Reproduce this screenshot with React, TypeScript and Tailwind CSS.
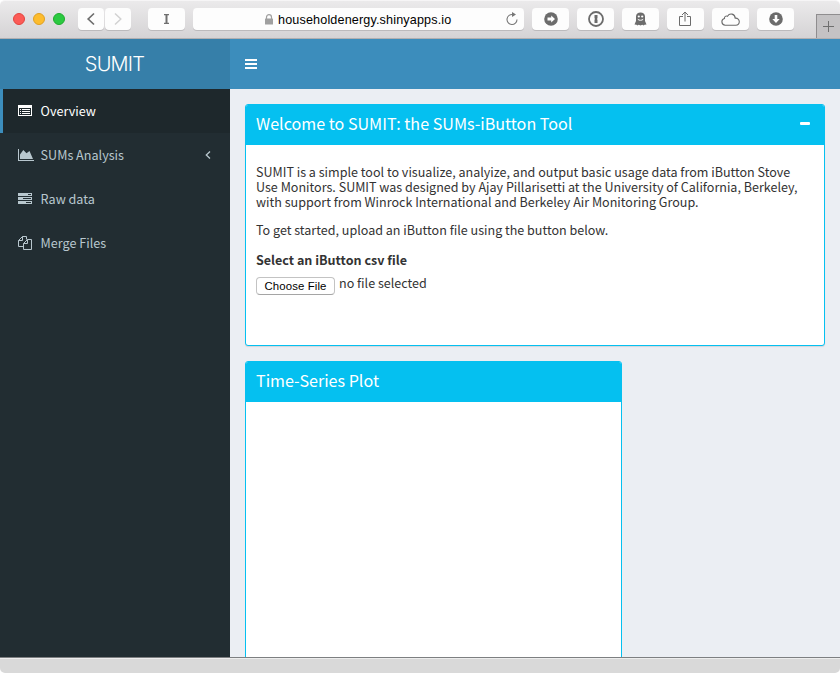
import type { ReactNode } from "react";

const SANS = "font-['Noto_Sans_CJK_SC','Open_Sans',sans-serif]";
const HELV = "font-['Liberation_Sans',sans-serif]";

function ToolButton({ className = "w-[37px]", children }: { className?: string; children?: ReactNode }) {
  return (
    <div
      className={`flex h-[22px] shrink-0 items-center justify-center rounded-[4px] bg-[#fdfdfd] shadow-[0_1px_0_#bcbabc] ${className}`}
    >
      {children}
    </div>
  );
}

function BrowserBar() {
  return (
    <header className="flex h-[39px] shrink-0 items-start rounded-t-[5px] border-t border-b border-t-[#f6f5f6] border-b-[#b1afb1] bg-linear-to-b from-[#ebeaeb] to-[#d5d3d5]">
      <div className="mt-[12px] ml-[13px] flex gap-2">
        <span className="size-3 rounded-full border border-[#e2443f] bg-[#fc5b57]" />
        <span className="size-3 rounded-full border border-[#dfa023] bg-[#fdbc2d]" />
        <span className="size-3 rounded-full border border-[#1eab2d] bg-[#2bc940]" />
      </div>
      <div className="mt-[7px] ml-[13px] flex">
        <ToolButton className="mr-px w-[26px]">
          <svg width="10" height="14" viewBox="0 0 10 14" fill="none" stroke="#6d6d6d" strokeWidth="1.7">
            <path d="M8 1.5 2.2 7 8 12.5" />
          </svg>
        </ToolButton>
        <ToolButton className="mr-[17px] w-[26px]">
          <svg width="10" height="14" viewBox="0 0 10 14" fill="none" stroke="#d2d2d2" strokeWidth="1.5">
            <path d="M2 1.5 7.8 7 2 12.5" />
          </svg>
        </ToolButton>
        <ToolButton className="mr-2 w-[37px]">
          <svg width="5" height="10" viewBox="0 0 5 10" fill="#707070" className="mr-px">
            <path d="M0 0h5v1.200H3.500v7.600H5V10H0V8.800h1.500V1.200H0z" />
          </svg>
        </ToolButton>
        <ToolButton className="mr-2 w-[331px]">
          <div className="flex w-full items-center pl-[71px]">
            <svg width="10" height="11" viewBox="0 0 10 11" className="mt-px">
              <rect x="1" y="4.500" width="8" height="6" rx=".5" fill="#a0a0a0" />
              <path d="M2.500 5V3.200a2.500 2.500 0 0 1 5 0V5" fill="none" stroke="#a0a0a0" strokeWidth="1.2" />
            </svg>
            <span className={`${HELV} mt-px ml-1 w-[174px] text-[12.6px] leading-[22px] tracking-[0.012em] whitespace-nowrap text-black`}>
              householdenergy.shinyapps.io
            </span>
            <svg width="14" height="14" viewBox="0 0 14 14" className="ml-[53px]">
              <path d="M8 2.600A5 5 0 1 0 12 7.500" fill="none" stroke="#777" strokeWidth="1.1" />
              <path d="M7 0v5l4-2.400z" fill="#777" />
            </svg>
          </div>
        </ToolButton>
        <div className="flex gap-2">
          <ToolButton>
            <svg width="14" height="14" viewBox="0 0 14 14">
              <circle cx="7" cy="7" r="6.800" fill="#6c6c6c" />
              <path d="M3.500 5.600h3.700V3.400L11 7 7.200 10.600V8.400H3.500z" fill="#fff" />
            </svg>
          </ToolButton>
          <ToolButton>
            <svg width="16" height="16" viewBox="0 0 16 16">
              <circle cx="8" cy="8" r="7" fill="none" stroke="#6c6c6c" strokeWidth="1.800" />
              <path d="M6.500 4h3v3.200l-.6.700.6.800V12h-3V8.700l.6-.7-.6-.8z" fill="#6c6c6c" />
            </svg>
          </ToolButton>
          <ToolButton>
            <svg width="13" height="14" viewBox="0 0 13 14">
              <path
                d="M2 4.500C2 2 4 .5 6.500.5S11 2 11 4.500V9l1.500 3.500-2 .2-.8.800-1.500-.8-1.700.8-1.700-.8-1.500.8-.8-.8-2-.2L2 9z"
                fill="#6c6c6c"
              />
              <circle cx="4.800" cy="4.500" r="1.100" fill="#fff" />
              <circle cx="8.200" cy="4.500" r="1.100" fill="#fff" />
              <path d="M3.800 7.300c1.300 1.300 4.100 1.300 5.400 0" fill="none" stroke="#fff" />
            </svg>
          </ToolButton>
          <ToolButton>
            <svg width="12" height="16" viewBox="0 0 12 16" fill="none" stroke="#6c6c6c" className="mr-px -mt-px">
              <path d="M4 5.500H.5v9h11v-9H8M6 10.500V1.500M3 4l3-3 3 3" />
            </svg>
          </ToolButton>
          <ToolButton>
            <svg width="19" height="13" viewBox="0 0 19 13" fill="none" stroke="#6c6c6c" strokeWidth="1.100">
              <path d="M4.200 12.200a3.400 3.400 0 0 1-.7-6.700C3.200 3.600 5 2.500 6.500 3.200 8.600-.3 13.900.5 14.200 5.200c5.200-.5 5.500 7 .5 7z" />
            </svg>
          </ToolButton>
          <ToolButton>
            <svg width="14" height="14" viewBox="0 0 14 14">
              <circle cx="7" cy="7" r="6.800" fill="#6c6c6c" />
              <path d="M5.700 3h2.600v4h2.400L7 11 3.300 7h2.400z" fill="#fff" />
            </svg>
          </ToolButton>
        </div>
      </div>
      <div className="mt-[13px] ml-auto flex h-6 w-6 items-center justify-center border-t border-l border-[#8f8d8f] bg-[#c4c2c4]">
        <svg width="11" height="11" viewBox="0 0 11 11" stroke="#6f6f6f">
          <path d="M5.500 0v11M0 5.500h11" />
        </svg>
      </div>
    </header>
  );
}

const ListIcon = (
  <svg width="14" height="12" viewBox="0 0 14 12" fill="currentColor" shapeRendering="crispEdges">
    <path fillRule="evenodd" d="M0 0h14v11H0zM1 3v7h12V3z" />
    <path d="M2 4h1v1H2zM4 4h8v1H4zM2 6h1v1H2zM4 6h8v1H4zM2 8h1v1H2zM4 8h8v1H4z" />
  </svg>
);

const ChartIcon = (
  <svg width="16" height="12" viewBox="0 0 16 12" fill="currentColor">
    <path d="M0 0h1v11h15v1H0zM2 10V5.500L5.300 1l3.200 3.200L11.500 2 15 10z" />
  </svg>
);

const TasksIcon = (
  <svg width="14" height="12" viewBox="0 0 14 12" fill="currentColor" shapeRendering="crispEdges">
    <path fillRule="evenodd" d="M0 0h14v3H0zM10 1v1h3V1zM0 4h14v3H0zM5 5v1h8V5zM0 8h14v3H0zM8 9v1h5V9z" />
  </svg>
);

const FilesIcon = (
  <svg width="14" height="14" viewBox="0 0 14 14" fill="none" stroke="currentColor">
    <path d="M5 10.500H.5v-6l4-4h4V3.500M4.500.5v4h-4M5.500 13.500v-6l4-4h4v10zM9.500 3.500v4h-4" />
  </svg>
);

function NavItem({ icon, label, active, expandable }: { icon: ReactNode; label: string; active?: boolean; expandable?: boolean }) {
  return (
    <li
      className={`flex h-11 items-center border-l-[3px] pl-[15px] ${
        active ? "border-[#3c8dbc] bg-[#1e282c] text-white" : "border-transparent text-[#b8c7ce]"
      }`}
    >
      <span className="w-[22.6px]">{icon}</span>
      <span className="text-[12.6px] leading-5">{label}</span>
      {expandable && (
        <svg width="6" height="8" viewBox="0 0 6 8" fill="none" stroke="currentColor" strokeWidth="1.300" className="mr-[19px] ml-auto">
          <path d="M5 .5 1.300 4 5 7.500" />
        </svg>
      )}
    </li>
  );
}

function BoxHeader({ title, children }: { title: string; children?: ReactNode }) {
  return (
    <div className="flex h-10 items-center justify-between bg-[#05c0f0] pr-[14px] pl-[10px] text-white">
      <h3 className="mb-[5px] text-[16.12px] leading-5">{title}</h3>
      {children}
    </div>
  );
}

export default function App() {
  return (
    <div className={`${SANS} flex h-[673px] w-[840px] flex-col overflow-hidden bg-white`}>
      <BrowserBar />
      <div className="flex h-[50px] shrink-0 bg-[#3c8dbc]">
        <div className="flex w-[230px] items-center justify-center bg-[#367fa9] pr-px font-['Inter',sans-serif] text-[20px] font-light text-white">
          <span className="tracking-[-0.04em]">SUMIT</span>
        </div>
        <div className="flex items-center pl-[15px]">
          <div className="flex w-3 flex-col gap-[2px]">
            <span className="h-[2px] bg-white" />
            <span className="h-[2px] bg-white" />
            <span className="h-[2px] bg-white" />
          </div>
        </div>
      </div>
      <div className="flex h-[568px] shrink-0">
        <nav className="w-[230px] shrink-0 bg-[#222d32]">
          <ul>
            <NavItem icon={ListIcon} label="Overview" active />
            <NavItem icon={ChartIcon} label="SUMs Analysis" expandable />
            <NavItem icon={TasksIcon} label="Raw data" />
            <NavItem icon={FilesIcon} label="Merge Files" />
          </ul>
        </nav>
        <main className="flex-1 overflow-hidden bg-[#ebeef3] px-[15px] pt-[15px]">
          <section className="h-[242px] overflow-hidden rounded-[3px] border border-[#05c0f0] bg-white shadow-[0_1px_1px_rgba(0,0,0,0.1)]">
            <BoxHeader title="Welcome to SUMIT: the SUMs-iButton Tool">
              <span className="mb-[3px] h-[3px] w-[10px] rounded-[1px] bg-white" />
            </BoxHeader>
            <div className="px-[10px] pt-[19px] text-[12.56px] leading-[15px] text-[#333]">
              <p className="whitespace-nowrap">
                SUMIT is a simple tool to visualize, analyize, and output basic usage data from iButton Stove
                <br />
                Use Monitors. SUMIT was designed by Ajay Pillarisetti at the University of California, Berkeley,
                <br />
                with support from Winrock International and Berkeley Air Monitoring Group.
              </p>
              <p className="mt-[13px]">To get started, upload an iButton file using the button below.</p>
              <p className="mt-[15px] font-bold">Select an iButton csv file</p>
              <div className="mt-2 flex items-start">
                <button
                  className={`${HELV} mt-[2px] h-[18px] w-[79px] rounded-[4px] border border-[#c3c3c3] border-b-[#a5a5a5] bg-white text-[11.4px] leading-[16px] tracking-[0.01em] text-black`}
                >
                  Choose File
                </button>
                <span className="ml-1">no file selected</span>
              </div>
            </div>
          </section>
          <section className="mt-[15px] h-[320px] w-[377px] overflow-hidden rounded-t-[3px] border border-[#05c0f0] bg-white">
            <BoxHeader title="Time-Series Plot" />
          </section>
        </main>
      </div>
      <footer className="h-4 shrink-0 rounded-b-[5px] border-t border-[#7d7f81] bg-[#d9d9d9] shadow-[inset_0_1px_0_#ededed]" />
    </div>
  );
}
